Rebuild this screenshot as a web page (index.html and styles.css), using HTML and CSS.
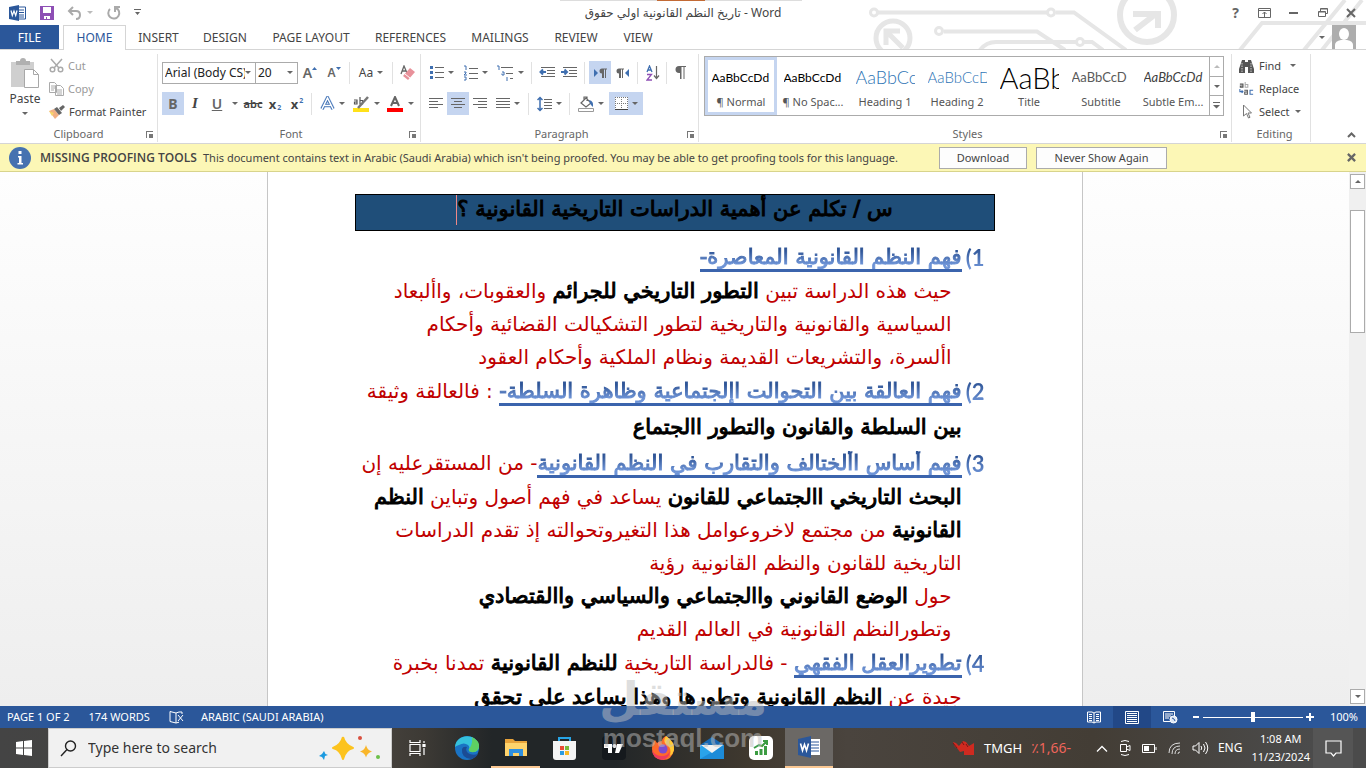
FILE: index.html
```html
<!DOCTYPE html>
<html lang="en">
<head>
<meta charset="utf-8">
<title>تاريخ النظم القانونية اولي حقوق - Word</title>
<link rel="stylesheet" href="styles.css">
</head>
<body>
<div class="app">
  <header class="top">
    <svg class="circuit" width="500" height="50" viewBox="866 0 500 50" fill="none" stroke="#e6e6e6" stroke-width="4" aria-hidden="true">
      <path d="M878 12.500H1047M1056 12.500H1074L1126 50M944 31.500H1037L1065 50M980 50Q986 42 996 42H1076M1084 42H1092L1103 50M1240 50L1262 23H1366M1304 50L1345 0M1322 50L1362 0"/>
      <circle cx="874" cy="12.500" r="3.500" stroke-width="3"/><circle cx="939" cy="31" r="3.500" stroke-width="3"/>
      <circle cx="1051" cy="12.500" r="3.500" stroke-width="3"/><circle cx="1080" cy="42" r="3.500" stroke-width="3"/>
      <circle cx="893" cy="38" r="17" stroke-width="5"/><path d="M886 45V31H900M887 32L903 48" stroke-width="5"/>
      <circle cx="1147" cy="15" r="27" stroke-width="6"/><path d="M1133 14H1158V28M1157 13L1135 30" stroke-width="6"/>
    </svg>
    <div class="strip" aria-hidden="true"><i></i></div>
    <div class="titlebar">
      <div class="quick">
        <svg width="18" height="16" viewBox="0 0 18 16"><path d="M8 2h8.500v12H8z" fill="#fff" stroke="#2b579a"/><path d="M10 5h5M10 7.500h5M10 10h5M10 12h5" stroke="#2b579a"/><path d="M0 2l10-2v16L0 14z" fill="#2b579a"/><path d="M2 5.500l1.300 5L5 6l1.700 4.500L8 5.500" fill="none" stroke="#fff" stroke-width="1.200"/></svg>
        <button aria-label="Save"><svg width="14" height="14" viewBox="0 0 14 14"><path d="M0 0h14v14H0z" fill="#8e4fb5"/><path d="M3 1h8v6H3zM4 10h6v3H7v-2H6v2H4z" fill="#fff"/></svg></button>
        <button aria-label="Undo"><svg width="16" height="14" viewBox="0 0 16 14" fill="none" stroke="#aaa" stroke-width="2"><path d="M6 1L2 5l4 4M2 5h7q4 0 4 4t-4 4"/></svg><i class="caret pale"></i></button>
        <button aria-label="Redo"><svg width="15" height="14" viewBox="0 0 15 14" fill="none" stroke="#aaa" stroke-width="2"><path d="M4 3a5.500 5.500 0 1 0 6-1M9 6V1h5"/></svg></button>
        <button aria-label="Customize quick access"><svg width="7" height="7" viewBox="0 0 7 7"><path d="M0 0h7v1H0zM1 3h5L3.500 6z" fill="#666"/></svg></button>
      </div>
      <h1 class="doctitle" dir="ltr">تاريخ النظم القانونية اولي حقوق - Word</h1>
      <div class="winbtns">
        <button aria-label="Help">?</button>
        <button aria-label="Ribbon options"><svg width="13" height="10" viewBox="0 0 13 10" fill="none" stroke="#666"><path d="M.5.5h12v9H.5zM.5 2.500h12M6.500 9V4M4.500 6l2-2 2 2"/></svg></button>
        <button aria-label="Minimize"><svg width="9" height="2" viewBox="0 0 9 2"><path d="M0 0h9v2H0z" fill="#666"/></svg></button>
        <button aria-label="Restore"><svg width="10" height="9" viewBox="0 0 10 9" fill="none" stroke="#666"><path d="M.5 3.500h7v5h-7zM.5 4h7M2.500 3V.5h7v5H8M2.500 1h7"/></svg></button>
        <button aria-label="Close"><svg width="10" height="10" viewBox="0 0 10 10" stroke="#666" stroke-width="2"><path d="M1 1l8 8M9 1L1 9"/></svg></button>
      </div>
    </div>
    <nav class="tabs">
      <a class="file" href="#file">FILE</a>
      <a class="on" href="#home">HOME</a>
      <a class="t3" href="#insert">INSERT</a>
      <a class="t4" href="#design">DESIGN</a>
      <a class="t5" href="#layout">PAGE LAYOUT</a>
      <a class="t6" href="#references">REFERENCES</a>
      <a class="t7" href="#mailings">MAILINGS</a>
      <a class="t8" href="#review">REVIEW</a>
      <a class="t9" href="#view">VIEW</a>
      <button class="account" aria-label="Account"><i class="caret"></i><svg width="24" height="24" viewBox="0 0 24 24"><path d="M0 0h24v24H0z" fill="#adadad"/><ellipse cx="12" cy="9" rx="5" ry="6" fill="#fff"/><path d="M3 24v-4q0-4 6-5h6q6 1 6 5v4z" fill="#fff"/></svg></button>
    </nav>
  </header>

  <section class="ribbon">
    <div class="group clip">
      <div class="body cliprow">
        <button class="paste"><svg width="30" height="32" viewBox="0 0 30 32"><path d="M1 4h23v25H1z" fill="#cfcfcf"/><path d="M6 7V3h4a3 3 0 0 1 6 0h4v4z" fill="#b0b0b0"/><path d="M14.500 11.500h9l5 5v13h-14z" fill="#fff" stroke="#a8a8a8"/><path d="M23.500 11.500v5h5" fill="none" stroke="#a8a8a8"/></svg><span>Paste</span><i class="caret"></i></button>
        <div class="stack">
          <button class="dim"><svg width="15" height="15" viewBox="0 0 15 15" fill="none" stroke="#aaa" stroke-width="1.500"><path d="M2 1l8 9M13 1L5 10"/><circle cx="3.500" cy="11.500" r="2.300"/><circle cx="11.500" cy="11.500" r="2.300"/></svg>Cut</button>
          <button class="dim"><svg width="15" height="14" viewBox="0 0 15 14" fill="#fff" stroke="#aaa"><path d="M.5.5h5l2 2v8h-7zM2 4h4M2 6h4M2 8h3M6.500 3.500h5l3 3v7h-8zM8 8h5M8 10h5M8 12h5"/></svg>Copy</button>
          <button><svg width="16" height="14" viewBox="0 0 16 14"><path d="M0 6l5-2 5 6-4 4z" fill="#f2b083"/><path d="M0 6l3 5 2-3z" fill="#f7d66b"/><path d="M5 4l3-2 5 6-3 2z" fill="#666"/><path d="M10 3l4-3 2 2-4 4z" fill="#666"/></svg>Format Painter</button>
        </div>
      </div>
      <div class="label">Clipboard<i class="launch"></i></div>
    </div>

    <div class="group font">
      <div class="body">
        <div class="row">
          <div class="combo c1"><input aria-label="Font" value="Arial (Body CS)"><i class="caret"></i></div>
          <div class="combo c2"><input aria-label="Font size" value="20"><i class="caret"></i></div>
          <button class="w24 glyph" aria-label="Grow font">A<svg width="5" height="12" viewBox="0 0 5 12"><path d="M0 3h5L2.500 0z" fill="#3f6fb0"/></svg></button>
          <button class="w24 glyph small" aria-label="Shrink font">A<svg width="5" height="12" viewBox="0 0 5 12"><path d="M0 0h5L2.500 3z" fill="#3f6fb0"/></svg></button>
          <i class="sep"></i>
          <button class="w36 aa" aria-label="Change case">Aa<i class="caret"></i></button>
          <i class="sep"></i>
          <button class="w24" aria-label="Clear formatting"><svg width="16" height="16" viewBox="0 0 16 16"><path d="M1 9L4 1l3 7M2 6h4" fill="none" stroke="#666" stroke-width="1.300"/><path d="M3 11l7-8 5 4-7 8z" fill="#e8919a"/><path d="M5 9l5 4" stroke="#fff"/></svg></button>
        </div>
        <div class="row">
          <button class="w22 act glyph">B</button>
          <button class="w22 ital">I</button>
          <button class="w22 glyph under">U</button>
          <button class="w14" aria-label="Underline style"><i class="caret"></i></button>
          <button class="w22 strike">abc</button>
          <button class="w22 xs">x<sub>2</sub></button>
          <button class="w22 xs">x<sup>2</sup></button>
          <i class="sep"></i>
          <button class="w34" aria-label="Text effects"><svg width="15" height="15" viewBox="0 0 15 15" fill="none"><path d="M2 13L7.500 2 13 13M4.500 9.500h6" stroke="#a9c4ea" stroke-width="4"/><path d="M2 13L7.500 2 13 13M4.500 9.500h6" stroke="#3f6fb0" stroke-width="3"/><path d="M2 13L7.500 2 13 13M4.500 9.500h6" stroke="#fff" stroke-width="1.500"/></svg><i class="caret"></i></button>
          <button class="w34" aria-label="Highlight"><svg width="17" height="16" viewBox="0 0 17 16"><path d="M0 12h16v4H0z" fill="#ffe11a"/><path d="M1 4h3v4H1.500V6H4M7 1v7h2.500V4.500H7" fill="none" stroke="#555" stroke-width="1.200"/><path d="M15 1L5 12" stroke="#777" stroke-width="2.500"/></svg><i class="caret"></i></button>
          <button class="w34" aria-label="Font color"><svg width="17" height="16" viewBox="0 0 17 16"><path d="M0 12h16v4H0z" fill="#f00"/><path d="M4 10l4-9 4 9M5.500 7h5" fill="none" stroke="#666" stroke-width="2"/></svg><i class="caret"></i></button>
        </div>
      </div>
      <div class="label">Font<i class="launch"></i></div>
    </div>

    <div class="group para">
      <div class="body">
        <div class="row roomy">
          <button class="w34" aria-label="Bullets"><svg width="14" height="15" viewBox="0 0 14 15"><path d="M0 1h3v3H0zM0 6h3v3H0zM0 11h3v3H0z" fill="#3f6fb0"/><path d="M5 2h9v1H5zM5 7h9v1H5zM5 12h9v1H5z" fill="#666"/></svg><i class="caret"></i></button>
          <button class="w34" aria-label="Numbering"><svg width="14" height="16" viewBox="0 0 14 16"><path d="M0 1h2v4M0 7h2v1L0 10h3M0 12h2v3H0" fill="none" stroke="#3f6fb0"/><path d="M5 3h9v1H5zM5 8h9v1H5zM5 13h9v1H5z" fill="#666"/></svg><i class="caret"></i></button>
          <button class="w34" aria-label="Multilevel list"><svg width="17" height="16" viewBox="0 0 17 16"><path d="M0 1h2v4M5 7h2v3H5V8.500M10 12v4" fill="none" stroke="#3f6fb0"/><path d="M4 2h12v1H4zM9 8h7v1H9zM13 13h3v1h-3z" fill="#666"/></svg><i class="caret"></i></button>
          <i class="sep"></i>
          <button class="w22" aria-label="Decrease indent"><svg width="16" height="12" viewBox="0 0 16 12"><path d="M2 .5h14M8 3.500h8M8 6.500h8M2 9.500h14" stroke="#666"/><path d="M7 5H2M4 2.500L1.500 5 4 7.500" fill="none" stroke="#3f6fb0" stroke-width="2"/></svg></button>
          <button class="w22" aria-label="Increase indent"><svg width="16" height="12" viewBox="0 0 16 12"><path d="M2 .5h14M8 3.500h8M8 6.500h8M2 9.500h14" stroke="#666"/><path d="M0 5h5M3.500 2.500L6 5 3.500 7.500" fill="none" stroke="#3f6fb0" stroke-width="2"/></svg></button>
          <i class="sep"></i>
          <button class="w22 act" aria-label="Left to right"><svg width="13" height="10" viewBox="0 0 13 10"><path d="M0 1l4 4-4 4z" fill="#3f6fb0"/><path d="M8 5.500a2 2 0 0 1 0-5h5v1h-1V10h-1V1.500h-1V10H8z" fill="#666"/></svg></button>
          <button class="w22" aria-label="Right to left"><svg width="13" height="10" viewBox="0 0 13 10"><path d="M13 1L9 5l4 4z" fill="#3f6fb0"/><path d="M3 5.500a2 2 0 0 1 0-5h5v1H7V10H6V1.500H5V10H3z" fill="#666"/></svg></button>
          <i class="sep"></i>
          <button class="w22" aria-label="Sort"><svg width="14" height="16" viewBox="0 0 14 16" fill="none"><path d="M1 7l2.500-6L6 7M2 5h3" stroke="#3f6fb0" stroke-width="1.300"/><path d="M1 9.500h4.500L1 15h5" stroke="#8e4fb5" stroke-width="1.300"/><path d="M10.500 1v12M8 10.500l2.500 3 2.500-3" stroke="#666" stroke-width="1.200"/></svg></button>
          <i class="sep"></i>
          <button class="w22" aria-label="Show marks"><svg width="11" height="13" viewBox="0 0 11 13"><path d="M4 7a3.400 3.400 0 0 1 0-7h7v1H9.500v12h-1V1h-2v12H5V7z" fill="#666"/></svg></button>
        </div>
        <div class="row">
          <button class="w22" aria-label="Align left"><svg width="14" height="11" viewBox="0 0 14 11"><path d="M0 .5h14M0 3.500h9M0 6.500h14M0 9.500h9" stroke="#666"/></svg></button>
          <button class="w22 act" aria-label="Center"><svg width="14" height="11" viewBox="0 0 14 11"><path d="M0 .5h14M3 3.500h8M0 6.500h14M3 9.500h8" stroke="#666"/></svg></button>
          <button class="w22" aria-label="Align right"><svg width="14" height="11" viewBox="0 0 14 11"><path d="M0 .5h14M5 3.500h9M0 6.500h14M5 9.500h9" stroke="#666"/></svg></button>
          <button class="w34" aria-label="Justify"><svg width="14" height="11" viewBox="0 0 14 11"><path d="M0 .5h14M0 3.500h14M0 6.500h14M0 9.500h14" stroke="#666"/></svg><i class="caret"></i></button>
          <i class="sep"></i>
          <button class="w34" aria-label="Line spacing"><svg width="15" height="16" viewBox="0 0 15 16"><path d="M3 1v14M.5 4L3 1.500 5.500 4M.5 12L3 14.500 5.500 12" fill="none" stroke="#3f6fb0" stroke-width="1.500"/><path d="M7 3.500h8M7 6.500h8M7 9.500h8M7 12.500h8" stroke="#666"/></svg><i class="caret"></i></button>
          <i class="sep"></i>
          <button class="w36" aria-label="Shading"><svg width="16" height="16" viewBox="0 0 16 16"><path d="M3 7l5-5 5 5-5 4zM6 5V1h3v4" fill="none" stroke="#666" stroke-width="1.200"/><path d="M11 4q5 1 4 7-3-2-4-7" fill="#3f6fb0"/><path d="M.5 12.500h15v3H.5z" fill="#fff" stroke="#999"/></svg><i class="caret"></i></button>
          <button class="w34 act" aria-label="Borders"><svg width="13" height="13" viewBox="0 0 13 13"><path d="M0 0h13v13H0z" fill="#fff"/><path d="M0 .5h13M0 6.500h13M.5 0v13M6.500 0v13M12.500 0v13" stroke="#777" stroke-dasharray="1 1"/><path d="M0 12.500h13" stroke="#444"/></svg><i class="caret"></i></button>
        </div>
      </div>
      <div class="label">Paragraph<i class="launch"></i></div>
    </div>

    <div class="group styles">
      <div class="gallery">
        <button class="style on"><span class="pv">AaBbCcDd</span><span>¶ Normal</span></button>
        <button class="style"><span class="pv">AaBbCcDd</span><span>¶ No Spac...</span></button>
        <button class="style"><span class="pv h1">AaBbCc</span><span>Heading 1</span></button>
        <button class="style"><span class="pv h2">AaBbCcD</span><span>Heading 2</span></button>
        <button class="style"><span class="pv tt">AaBb</span><span>Title</span></button>
        <button class="style"><span class="pv st">AaBbCcD</span><span>Subtitle</span></button>
        <button class="style"><span class="pv em">AaBbCcDd</span><span>Subtle Em...</span></button>
        <div class="gscroll">
          <button aria-label="Up"><i class="caret up pale"></i></button>
          <button aria-label="Down"><i class="caret"></i></button>
          <button aria-label="More"><svg width="7" height="7" viewBox="0 0 7 7"><path d="M0 0h7v1H0zM0 3h7L3.500 6.500z" fill="#666"/></svg></button>
        </div>
      </div>
      <div class="label">Styles<i class="launch"></i></div>
    </div>

    <div class="group edit">
      <div class="body stack">
        <button><svg width="15" height="14" viewBox="0 0 15 14" fill="#555"><path d="M3 1h3v2h3V1h3l3 9v4H9V8H6v6H0v-4z"/><path d="M3 4v9M12 4v9" stroke="#fff" stroke-width=".7" stroke-dasharray="1.500 1"/></svg>Find<i class="caret far"></i></button>
        <button><svg width="15" height="16" viewBox="0 0 17 16" fill="none" stroke-width="1.200"><path d="M1 2.500h3.500V6H1.500V4.500h3" stroke="#555"/><path d="M7 0v6h3V3H7" stroke="#aaa"/><path d="M1 8v3h3M3 9.500l1.500 1.500L3 12.500" stroke="#3f6fb0"/><path d="M6 9.500h3.500V14H6.500v-2.500h3" stroke="#555"/><path d="M16 9.500h-3.500V14H16" stroke="#3f6fb0"/></svg>Replace</button>
        <button><svg width="15" height="15" viewBox="0 0 15 15"><path d="M4.500 1v11l3-2.500 2 4.500 1.500-.7-2-4.300h3.500z" fill="#fff" stroke="#777"/></svg>Select<i class="caret"></i></button>
      </div>
      <div class="label">Editing</div>
    </div>
    <button class="collapse" aria-label="Collapse ribbon"><svg width="9" height="6" viewBox="0 0 9 6"><path d="M1 5l3.500-3.500L8 5" fill="none" stroke="#666" stroke-width="2"/></svg></button>
  </section>

  <section class="notice">
    <svg width="22" height="22" viewBox="0 0 22 22"><circle cx="11" cy="11" r="11" fill="#4672b0"/><path d="M9.500 4h3v3h-3zM9 9h3.500v7H14v1.500H8.500V16H10v-5.500H9z" fill="#fff"/></svg>
    <strong>MISSING PROOFING TOOLS</strong>
    <p>This document contains text in Arabic (Saudi Arabia) which isn't being proofed. You may be able to get proofing tools for this language.</p>
    <button class="btn b1">Download</button>
    <button class="btn b2">Never Show Again</button>
    <button class="x" aria-label="Close message"><svg width="9" height="9" viewBox="0 0 10 10" stroke="#666" stroke-width="2.500"><path d="M1 1l8 8M9 1L1 9"/></svg></button>
  </section>

  <main class="desk">
    <article class="paper" dir="rtl" lang="ar">
      <h2 class="question">س / تكلم عن أهمية الدراسات التاريخية القانونية ؟<i class="cursor"></i></h2>
      <ol class="list">
        <li><span class="num">1)</span><p class="head"><u>فهم النظم القانونية المعاصرة-</u></p>
          <p class="in">حيث هذه الدراسة تبين <b>التطور التاريخي للجرائم</b> والعقوبات، واألبعاد</p>
          <p class="in">السياسية والقانونية والتاريخية لتطور التشكيالت القضائية وأحكام</p>
          <p class="in">األسرة، والتشريعات القديمة ونظام الملكية وأحكام العقود</p></li>
        <li><span class="num">2)</span><p class="head"><u>فهم العالقة بين التحوالت اإلجتماعية وظاهرة السلطة-</u> : فالعالقة وثيقة</p>
          <p class="wide"><b>بين السلطة والقانون والتطور االجتماع</b></p></li>
        <li><span class="num">3)</span><p class="head"><u>فهم أساس األختالف والتقارب في النظم القانونية</u>- من المستقرعليه إن</p>
          <p><b>البحث التاريخي االجتماعي للقانون</b> يساعد في فهم أصول وتباين <b>النظم</b></p>
          <p><b>القانونية</b> من مجتمع لاخروعوامل هذا التغيروتحوالته إذ تقدم الدراسات</p>
          <p>التاريخية للقانون والنظم القانونية رؤية</p>
          <p class="in">حول <b>الوضع القانوني واالجتماعي والسياسي واالقتصادي</b></p>
          <p class="in">وتطورالنظم القانونية في العالم القديم</p></li>
        <li><span class="num">4)</span><p class="head"><u>تطويرالعقل الفقهي</u> - فالدراسة التاريخية <b>للنظم القانونية</b> تمدنا بخبرة</p>
          <p>جيدة عن <b>النظم القانونية وتطورها وهذا يساعد على تحقق</b></p></li>
      </ol>
    </article>
    <div class="scroll" aria-hidden="true"><i class="sb"><i class="caret up"></i></i><i class="thumb"></i><i class="track"></i><i class="sb"><i class="caret"></i></i></div>
  </main>

  <footer class="status">
    <span class="s1">PAGE 1 OF 2</span><span class="s2">174 WORDS</span>
    <svg class="s3" width="15" height="13" viewBox="0 0 15 13" fill="none" stroke="#fff"><path d="M7 2v10M7 2L1 .5v10l6 1.500 3-.8M7 2l3-1h3v2M9 4l5 6M14 4L9 10"/></svg>
    <span>ARABIC (SAUDI ARABIA)</span>
    <div class="views">
      <button aria-label="Read mode"><svg width="14" height="13" viewBox="0 0 14 13" fill="none" stroke="#fff"><path d="M.5 1H5l2 1 2-1h4.500v10H9l-2 1-2-1H.500zM7 2v10M2 3.500h3M2 5.500h3M2 7.500h3M2 9.500h3M9 3.500h3M9 5.500h3M9 7.500h3M9 9.500h3"/></svg></button>
      <button class="on" aria-label="Print layout"><svg width="14" height="13" viewBox="0 0 14 13" fill="none" stroke="#fff"><path d="M.5.5h13v12H.5zM2 2.500h10M2 4.500h10M2 6.500h10M2 8.500h10M2 10.500h10"/></svg></button>
      <button aria-label="Web layout"><svg width="15" height="13" viewBox="0 0 15 13" fill="none" stroke="#fff"><path d="M7 10.500H.5V.5h11V5M2 3h8M2 5h6M2 7h4"/><circle cx="10.500" cy="8.500" r="3.500" fill="#dce6f4"/><path d="M9 7l2 1 1 2" stroke="#2b579a"/></svg></button>
      <button class="zb" aria-label="Zoom out"><svg width="6" height="2" viewBox="0 0 6 2"><path d="M0 0h6v2H0z" fill="#fff"/></svg></button>
      <input type="range" aria-label="Zoom" value="50">
      <button class="zb" aria-label="Zoom in"><svg width="8" height="8" viewBox="0 0 8 8"><path d="M3 0h2v3h3v2H5v3H3V5H0V3h3z" fill="#fff"/></svg></button>
      <span class="pct">100%</span>
    </div>
  </footer>

  <footer class="task">
    <button class="start" aria-label="Start"><svg width="16" height="16" viewBox="0 0 16 16" fill="#fff"><path d="M0 2l7-1v6.500H0zM8 1l8-1v7.500H8zM0 8.500h7V15l-7-1zM8 8.500h8V16l-8-1z"/></svg></button>
    <label class="search"><svg width="17" height="17" viewBox="0 0 17 17" fill="none" stroke="#222" stroke-width="1.400"><circle cx="10.500" cy="6" r="5"/><path d="M7 9.500L1 16"/></svg><input aria-label="Search" placeholder="Type here to search">
      <svg width="62" height="26" viewBox="0 0 62 26"><path d="M24 2q2 8 10 11-8 2-10 11-2-9-10-11 8-3 10-11" fill="#fcc31e" stroke="#fcc31e" stroke-width="2" stroke-linejoin="round"/><path d="M47 10q1 5 6 6.500-5 1.500-6 6-1-4.500-6-6 5-1.500 6-6.500" fill="#f9b62a"/><path d="M5 16l1.500 3L9 20l-3 1-1 4-2-3-3-1 3-2z" fill="#1b9ae0"/><circle cx="41" cy="3" r="2" fill="#d9503f"/><circle cx="59" cy="22" r="2" fill="#6cc04a"/></svg></label>
    <button class="app-i first" aria-label="Task view"><svg width="17" height="16" viewBox="0 0 17 16" fill="none" stroke="#fff" stroke-width="1.200"><path d="M1 0v2.500h10V0M1 4.500h10v7H1zM1 16v-2.500h10V16M15 1v2M15 8v7"/><path d="M14 4.500h2v2h-2z" fill="#fff"/></svg></button>
    <button class="app-i" aria-label="Edge"><svg width="24" height="24" viewBox="0 0 24 24"><circle cx="12" cy="12" r="12" fill="#1a73c4"/><path d="M0 11C1-2 21-4 24 10q0 6-6 6-5 0-4-3 1-2-1-4-4-3-9 0-3 1-4 2" fill="#35c1dc"/><path d="M17 1q8 4 7 10-1 6-8 5-3-1-2-3 4-5 3-12" fill="#5fcf62"/><path d="M7 13q-1 9 9 10 5-1 7-5-6 2-10-1-3-3-1-6-4-1-5 2" fill="#1b4c94"/></svg></button>
    <button class="app-i run" aria-label="File Explorer"><svg width="22" height="19" viewBox="0 0 22 19"><path d="M0 1h8l2 2h12v15H0z" fill="#e8a33a"/><path d="M0 5h22v13H0z" fill="#ffd36b"/><path d="M4 18v-7h14v7h-4v-3H8v3z" fill="#2f8fdf"/></svg></button>
    <button class="app-i" aria-label="Store"><svg width="23" height="24" viewBox="0 0 23 24"><path d="M6 7V2h11v5" fill="none" stroke="#27a4e6" stroke-width="2"/><path d="M0 5h23v16q0 3-3 3H3q-3 0-3-3z" fill="#f4f4f4"/><path d="M7 10h4v4H7z" fill="#e94b35"/><path d="M12 10h4v4h-4z" fill="#7ab93b"/><path d="M7 15h4v4H7z" fill="#2b9be0"/><path d="M12 15h4v4h-4z" fill="#f7b924"/></svg></button>
    <button class="app-i" aria-label="TradingView"><svg width="24" height="24" viewBox="0 0 24 24"><rect width="24" height="24" rx="4" fill="#15191d"/><path d="M2 8h8v9H6v-5H2zM15 8h6l-4 9h-4z" fill="#fff"/><circle cx="12.500" cy="10" r="2" fill="#fff"/></svg></button>
    <button class="app-i" aria-label="Firefox"><svg width="24" height="24" viewBox="0 0 24 24"><path d="M15 0q9 6 8 14-2 10-11 10Q1 23 1 13 1 7 4 4l2 3q2-2 5-2 0-3 4-5" fill="#ff6a2b"/><path d="M15 0q9 6 8 14-1 4-4 6 2-8-3-11-5-3-1-9" fill="#ffcb36"/><path d="M1 14q3 6 10 6 6 0 8-5-1 8-8 9-9-1-10-10" fill="#ef3b5e"/><circle cx="12" cy="13" r="4.500" fill="#7d4ccf"/></svg></button>
    <button class="app-i" aria-label="Mail"><svg width="24" height="22" viewBox="0 0 24 22"><path d="M0 8l12-8 12 8v14H0z" fill="#1768b3"/><path d="M0 8v14h24V8z" fill="#2aa3ea"/><path d="M0 22l24-14v14z" fill="#1c8bd8"/><path d="M1 8h22l-11 8z" fill="#f2f2f2"/></svg></button>
    <button class="app-i" aria-label="Finance"><svg width="24" height="24" viewBox="0 0 24 24"><rect width="24" height="24" rx="5" fill="#fff"/><path d="M6 15h3v4H6zM10.500 13h3v6h-3zM15 10h3v9h-3z" fill="#3b9c42"/><path d="M5 12l5-3 3 1 5-5M14 5h4v4" fill="none" stroke="#3b9c42" stroke-width="2"/></svg></button>
    <button class="app-i run cur" aria-label="Word"><svg width="22" height="22" viewBox="0 0 22 22"><path d="M11 3h11v16H11z" fill="#fff"/><path d="M13 6h8M13 9h8M13 12h8M13 15h8" stroke="#2b579a" stroke-width="1.200"/><path d="M0 3l13-3v22L0 19z" fill="#2b579a"/><path d="M2.500 7.500l2 7 2-6 2 6 2-7" fill="none" stroke="#fff" stroke-width="1.600"/></svg></button>
    <div class="tray">
      <svg width="23" height="16" viewBox="0 0 23 16"><path d="M1 2l3 1 3 3 4-5 3 1 3 4 5-3v12H12v-4l-4 1-3-4-2-1z" fill="#cf2a20"/><path d="M1 3l4 5M10 2l2 3M14 4l2 3" stroke="#7a1515"/></svg>
      <span class="tick">TMGH</span><span class="neg">٪1,66-</span>
      <svg width="12" height="7" viewBox="0 0 12 7" fill="none" stroke="#fff" stroke-width="1.300"><path d="M1 6.500l5-5 5 5"/></svg>
      <svg width="12" height="16" viewBox="0 0 12 16" fill="none" stroke="#fff"><path d="M2 1.500q4-2 8 0M2 14.500q4 2 8 0M1.500 4.500h6v7h-6zM7.500 7L11 5.500v5L7.500 9"/></svg>
      <svg width="15" height="9" viewBox="0 0 15 9" fill="none" stroke="#fff"><path d="M.5.5h12v8H.5zM14 3v3"/><path d="M2 2h5v5H2z" fill="#fff" stroke="none"/></svg>
      <svg width="13" height="14" viewBox="0 0 13 14" fill="none" stroke="#ddd"><path d="M1 12Q1 2 12 2M4 13q0-8 8-8M7 13q0-5 5-5M10 13q0-2 2-2"/></svg>
      <svg width="17" height="14" viewBox="0 0 17 14" fill="none" stroke="#fff"><path d="M1 5h2.500L7 1.500v11L3.500 9H1zM9 5q1.500 2 0 4M11.500 3q3 4 0 8M13.500 1q4.500 6 0 12"/></svg>
      <span class="lang">ENG</span>
      <time><span>1:08 AM</span><span>11/23/2024</span></time>
      <button class="note" aria-label="Notifications"><svg width="17" height="17" viewBox="0 0 17 17" fill="none" stroke="#fff" stroke-width="1.200"><path d="M1 1h15v12h-5l-2.500 3L6 13H1z"/></svg></button>
    </div>
  </footer>
  <div class="mark" aria-hidden="true"><span class="m1">مستقل</span><span class="m2">mostaql.com</span></div>
</div>
</body>
</html>
```
FILE: styles.css
```css
* { box-sizing: border-box; }
body { margin: 0; font: 11px/16px "Noto Sans", "Open Sans", "DejaVu Sans", sans-serif; color: #444; background: #fff; }
button { font: inherit; color: inherit; background: none; border: 0; padding: 0; display: flex; align-items: center; justify-content: center; }
button, svg, .caret, .sep { flex: none; }
p, h1, h2, ol { margin: 0; padding: 0; font-weight: 400; }
a { color: inherit; text-decoration: none; }
.app { position: relative; height: 100vh; display: flex; flex-direction: column; overflow: hidden; }
.caret { display: block; border: 3px solid transparent; border-top-color: #666; border-bottom: 0; }
.caret.up { border-top: 0; border-bottom: 3px solid #666; }
.caret.pale { border-top-color: #bbb; border-bottom-color: #bbb; }

.top { position: relative; flex: none; }
.circuit { position: absolute; right: 0; top: 0; }
.strip { position: absolute; top: 0; left: 41%; width: 242px; height: 1px; background: #ddd; display: flex; justify-content: center; }
.strip i { width: 48px; background: #c26a35; }
.titlebar { position: relative; height: 25px; display: grid; grid-template-columns: 1fr auto 1fr; align-items: center; }
.quick { display: flex; align-items: center; gap: 13px; padding-left: 9px; height: 22px; }
.quick button { gap: 4px; }
.doctitle { font-size: 12px; line-height: 24px; }
.winbtns { display: flex; justify-content: flex-end; align-items: center; padding-right: 5px; height: 22px; }
.winbtns button { width: 29px; height: 20px; font-size: 14px; font-weight: 700; color: #666; }
.winbtns button:last-child { width: 20px; margin-left: 4px; }
.tabs { position: relative; display: flex; height: 25px; line-height: 25px; border-bottom: 1px solid #d5d5d5; text-align: center; font-size: 12px; }
.tabs .file { width: 59px; background: #2b579a; color: #fff; }
.tabs .on { width: 63px; margin: 0 0 -1px 4px; border: 1px solid #d5d5d5; border-bottom: 0; background: #fff; color: #2b579a; line-height: 24px; }
.t3 { width: 65px; } .t4 { width: 68px; } .t5 { width: 104px; } .t6 { width: 95px; } .t7 { width: 84px; } .t8 { width: 68px; } .t9 { width: 56px; }
.account { margin-left: auto; padding-right: 10px; gap: 7px; height: 24px; }

.ribbon { flex: none; display: flex; height: 94px; padding-top: 4px; border-bottom: 1px solid #d5d5d5; }
.group { display: flex; flex-direction: column; height: 88px; border-right: 1px solid #e1e1e1; }
.body { flex: 1; }
.label { position: relative; height: 16px; line-height: 16px; text-align: center; color: #666; }
.launch { position: absolute; right: 4px; bottom: 4px; width: 7px; height: 7px; border: 1px solid #777; border-width: 1px 0 0 1px; background: linear-gradient(#777, #777) 100% 100% / 4px 4px no-repeat; }
.clip { width: 158px; } .font { width: 263px; padding-left: 4px; } .para { width: 278px; padding-left: 4px; }
.styles { flex: 1; padding-left: 5px; } .edit { width: 79px; padding-left: 7px; }
.cliprow { display: flex; gap: 4px; padding-left: 5px; }
.paste { width: 40px; flex-direction: column; justify-content: flex-start; padding-top: 4px; gap: 1px; font-size: 12px; }
.paste .caret { margin-top: 4px; }
.stack { display: flex; flex-direction: column; align-items: flex-start; }
.stack button { height: 23px; gap: 4px; }
.edit .stack { font-size: 11px; }
.edit .stack button { gap: 5px; }
.dim { color: #9a9a9a; }
.far { margin-left: 4px; }
.body .row { display: flex; align-items: center; height: 23px; margin-bottom: 8px; }
.body .row:first-child { margin-top: 7px; }
.row button { height: 23px; gap: 4px; }
.w14 { width: 14px; } .w22 { width: 22px; } .w24 { width: 24px; } .w34 { width: 34px; } .w36 { width: 36px; }
.act { background: #c5d5f0; }
.sep { width: 1px; height: 22px; margin: 0 3px; background: #e1e1e1; }
.roomy .sep { margin: 0 4px; }
.roomy .sep:last-of-type { margin: 0 2px; }
.combo { display: flex; align-items: center; height: 22px; border: 1px solid #ababab; padding-right: 4px; }
.combo input { flex: 1; min-width: 0; width: 0; border: 0; padding: 0 0 0 2px; font: inherit; font-size: 12px; color: #222; background: none; }
.c1 { width: 94px; } .c2 { width: 43px; margin-left: -1px; }
.row .glyph { font-size: 14px; font-weight: 600; color: #666; gap: 0; }
.row .glyph.small { font-size: 12px; }
.row .act.glyph { font-weight: 700; }
.row .aa { font-size: 12px; }
.row .ital { font: italic 700 15px "Liberation Serif", serif; }
.under { text-decoration: underline; }
.row .strike { font-weight: 600; text-decoration: line-through; }
.row .xs { font-weight: 700; font-size: 13px; gap: 1px; }
.xs sub, .xs sup { font-size: 7px; line-height: 7px; color: #3f6fb0; }
.xs sub { align-self: flex-end; margin-bottom: 4px; } .xs sup { align-self: flex-start; margin-top: 5px; }
.gallery { display: flex; height: 60px; margin-top: 2px; margin-right: 7px; border: 1px solid #ababab; flex: none; }
.styles .label { margin-top: auto; }
.style { flex: 1; min-width: 0; flex-direction: column; justify-content: flex-start; padding-top: 4px; border: 3px solid transparent; white-space: nowrap; color: #555; }
.style.on { border-color: #c5d5f0; }
.pv { display: flex; align-items: center; width: 59px; height: 27px; margin-bottom: 3px; overflow: hidden; font: 12px/27px Lato, sans-serif; color: #000; }
.h1 { font-size: 18px; font-weight: 300; color: #2e74b5; } .h2 { font-size: 15px; font-weight: 300; color: #2e74b5; }
.tt { font-size: 29px; font-weight: 300; } .st { font-size: 13px; color: #5a5a5a; } .em { font-style: italic; font-size: 13px; color: #404040; }
.gscroll { width: 14px; display: flex; flex-direction: column; border-left: 1px solid #ababab; }
.gscroll button { flex: 1; } .gscroll button + button { border-top: 1px solid #ababab; }
.collapse { width: 55px; padding-left: 26px; align-self: flex-end; height: 16px; }

.notice { flex: none; display: flex; align-items: center; height: 28px; padding: 0 10px 0 9px; background: #fcf7b6; border-bottom: 1px solid #d8d48c; white-space: nowrap; }
.notice strong { margin: 0 10px 0 9px; font-family: "Open Sans", sans-serif; font-weight: 600; font-size: 12px; width: 153px; }
.notice p { flex: 0 1 736px; }
.btn { height: 22px; border: 1px solid #ababab; background: #fdfdfd; }
.b1 { width: 88px; margin-right: 9px; } .b2 { width: 131px; }
.x { margin-left: auto; }

.desk { flex: 1; min-height: 0; display: flex; overflow: hidden; background: linear-gradient(#fefefe, #eee); }
.paper { width: 816px; margin: 0 auto; padding: 22px 87px 0; border: 1px solid #c6c6c6; border-width: 0 1px; background: #fff; font: 20px/33px "DejaVu Sans", sans-serif; color: #c00000; overflow: hidden; white-space: nowrap; }
.paper b { color: #000; font-size: 21px; font-weight: 400; -webkit-text-stroke: 1px #000; }
.question { height: 37px; line-height: 28px; border: 1px solid #000; background: #1f4e79; color: #000; text-align: center; font-size: 21px; font-weight: 400; -webkit-text-stroke: 1px #000; }
.cursor { display: inline-block; width: 1px; height: 30px; background: #e88; vertical-align: top; }
.list { list-style: none; padding: 9px 10px 0 0; }
.list li { display: grid; grid-template-columns: 23px 1fr; }
.list li p { grid-column: 2; height: 33px; }
.list li .head { height: 35px; line-height: 35px; }
.list .in { padding-right: 10px; }
.list li .wide { height: 37px; line-height: 37px; }
.num, .head u { color: transparent; background: linear-gradient(#2f5597 25%, #6d93d6 80%); background-clip: text; -webkit-background-clip: text; text-decoration: none; }
.num { font: 700 22px/35px Lato, sans-serif; }
.head u { font-size: 21px; border-bottom: 3px solid #3b64ad; -webkit-text-stroke: 1px transparent; }
.scroll { width: 17px; display: flex; flex-direction: column; align-items: center; padding: 2px 1px; background: #f0f0f0; }
.sb { width: 15px; height: 15px; flex: none; display: flex; align-items: center; justify-content: center; border: 1px solid #ababab; background: #fff; }
.thumb { width: 15px; height: 123px; margin-top: 21px; border: 1px solid #ababab; background: #fff; }
.track { flex: 1; }

.status { flex: none; display: flex; align-items: center; height: 22px; padding-left: 7px; background: #2b579a; color: #fff; }
.s1, .s2 { margin-right: 19px; } .s3 { margin-right: 17px; }
.views { display: flex; align-items: center; margin-left: auto; height: 22px; padding-right: 8px; }
.views button { width: 38px; height: 22px; } .views .on { background: #224887; }
.views .zb { width: 14px; }
.views input { appearance: none; width: 100px; height: 10px; margin: 0; background: linear-gradient(#fff, #fff) 0 50% / 100% 1px no-repeat; }
.views input::-webkit-slider-thumb { appearance: none; width: 4px; height: 10px; background: #fff; }
.pct { width: 36px; margin-left: 5px; text-align: right; }

.task { flex: none; display: flex; height: 40px; background: linear-gradient(90deg, #444 0, #45413c 28%, #3d3a35 31%, #222628 36%, #222628 45%, #40392f 55%, #4a443e 62%, #433d35 80%, #4b4b4b 96%); color: #fff; }
.start { width: 48px; }
.search { display: flex; align-items: center; width: 344px; padding: 0 10px 0 11px; gap: 11px; background: #f1f1f1; border: 1px solid #ccc; }
.search input { flex: 1; min-width: 0; border: 0; background: none; padding: 0; font: 14px/20px "Noto Sans", sans-serif; }
.search input::placeholder { color: #333; }
.app-i { width: 49px; height: 40px; }
.first { width: 50px; }
.run { border-bottom: 2px solid #fbc893; }
.cur { background: #6b6865; width: 48px; }
.tray { display: flex; align-items: center; margin-left: auto; gap: 11px; }
.tick { font-size: 13px; margin: 0 -2px; } .neg { font-size: 14px; color: #f0655b; margin-right: 14px; }
.lang { margin-left: -2px; font-size: 12px; }
time { display: flex; flex-direction: column; text-align: center; line-height: 18px; margin-left: -2px; }
.note { width: 40px; height: 40px; margin: 0 13px 0 -8px; background: #555; }

.mark { position: absolute; left: 600px; bottom: 16px; width: 166px; display: flex; flex-direction: column; align-items: center; color: rgba(190, 190, 190, .5); }
.m1 { font: 700 46px/50px "DejaVu Sans", sans-serif; }
.m2 { font: 700 26px/28px "Liberation Sans", sans-serif; }
```
